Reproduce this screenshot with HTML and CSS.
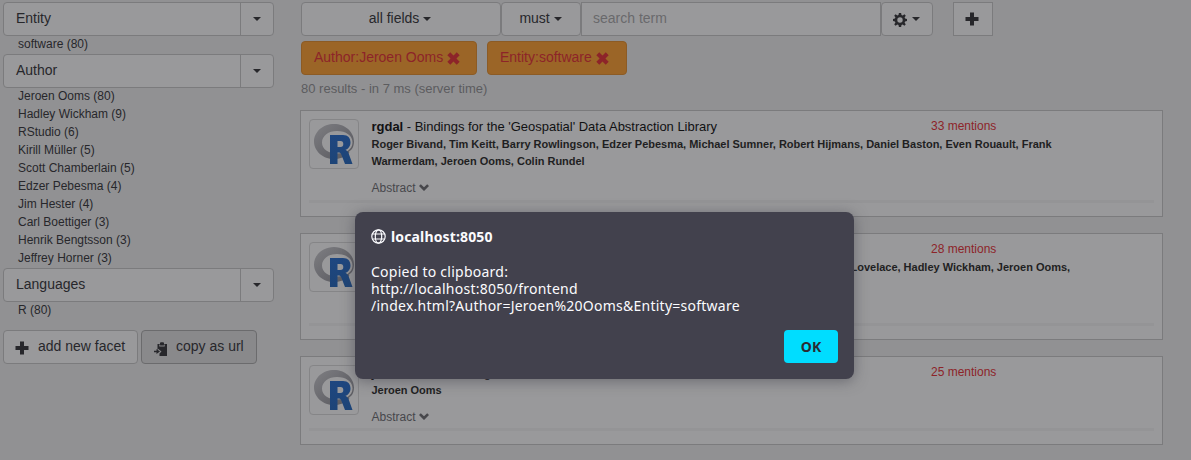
FILE: index.html
```
<!DOCTYPE html>
<html lang="en">
<head>
<meta charset="utf-8">
<title>Software search</title>
<link rel="stylesheet" href="styles.css">
</head>
<body>
<svg class="defs" width="0" height="0">
  <defs>
    <linearGradient id="ring" x1="0" y1="0" x2="1" y2="1"><stop offset="0" stop-color="#7e7e82"/><stop offset="1" stop-color="#56565c"/></linearGradient>
    <linearGradient id="blue" x1="0" y1="0" x2="0" y2="1"><stop offset="0" stop-color="#1f4780"/><stop offset="1" stop-color="#1d4477"/></linearGradient>
    <symbol id="rlogo" viewBox="0 0 40 40">
      <path fill="url(#ring)" fill-rule="evenodd" d="M20 0C31 0 40 7.800 40 17.500S31 35 20 35 0 27.200 0 17.500 9 0 20 0ZM23 7C14.500 7 8 11.800 8 18.500S14.500 29.500 23 29.500 38.500 25.500 38.500 18.500 32 7 23 7Z"/>
      <path fill="#99999b" d="M35 27.500L39 24.500V33L37 33Z"/>
      <path fill="url(#blue)" fill-rule="evenodd" d="M16 11H29C34 11 36.500 14 36.500 18.500 36.500 22.500 34 25 31.500 25.800 33 26.500 34 28 34.700 29.500L38.500 40H31L27.500 31C26.800 29 26 28.500 24 28.500H23.500V40H16ZM23.500 17V23H26.500C28.500 23 29.300 22 29.300 20S28.500 17 26.500 17Z"/>
    </symbol>
    <symbol id="plus" viewBox="0 0 14 14"><path d="M5 .5h4V5h4.500v4H9v4.500H5V9H.5V5H5Z"/></symbol>
    <symbol id="cross" viewBox="0 0 12 12"><path d="M3 .3L6 3.300 9 .3 11.700 3 8.700 6l3 3L9 11.700l-3-3-3 3L.3 9l3-3-3-3Z"/></symbol>
    <symbol id="chev" viewBox="0 0 10 7"><path d="M0 2L1.800.2 5 3.300 8.200.2 10 2 5 7Z"/></symbol>
  </defs>
</svg>
<div class="page">
  <aside class="side">
    <div class="facet"><span class="name">Entity</span><span class="toggle"><i class="caret"></i></span></div>
    <ul><li>software (80)</li></ul>
    <div class="facet"><span class="name">Author</span><span class="toggle"><i class="caret"></i></span></div>
    <ul><li>Jeroen Ooms (80)</li><li>Hadley Wickham (9)</li><li>RStudio (6)</li><li>Kirill Müller (5)</li><li>Scott Chamberlain (5)</li><li>Edzer Pebesma (4)</li><li>Jim Hester (4)</li><li>Carl Boettiger (3)</li><li>Henrik Bengtsson (3)</li><li>Jeffrey Horner (3)</li></ul>
    <div class="facet"><span class="name">Languages</span><span class="toggle"><i class="caret"></i></span></div>
    <ul><li>R (80)</li></ul>
    <div class="actions">
      <div class="btn add"><svg width="14" height="14"><use href="#plus"/></svg><span>add new facet</span></div>
      <div class="btn copy"><svg width="14" height="14" viewBox="0 0 14 14"><path d="M3.500 2H6V1.200Q6 .2 7 .2h2q1 0 1 1V2h3v12H5.500V11.500L7.500 9.500 4 6.800V8.500H3.500Z"/><path d="M0 8.800h2.500V7L6 9.500 2.500 12v-1.700H0Z"/><path class="clip" d="M5.300 2.500v2h5.400v-2h-.8v1.100H6.100V2.500Z"/></svg><span>copy as url</span></div>
    </div>
  </aside>
  <main class="main">
    <div class="search">
      <div class="btn fields">all fields <i class="caret"></i></div>
      <div class="btn must">must <i class="caret"></i></div>
      <div class="input">search term</div>
      <div class="btn cog"><svg width="14" height="14" viewBox="0 0 14 14"><path fill-rule="evenodd" d="M5.900 0h2.200l.4 2 1.200.5L11.400 1.300 12.800 2.700 11.600 4.300l.5 1.300 1.900.3v2.200l-1.900.3-.5 1.300 1.200 1.600-1.400 1.400-1.700-1.200-1.200.5-.4 2H5.900L5.500 12l-1.200-.5-1.700 1.200-1.400-1.400 1.200-1.600L1.900 8.400 0 8.100V5.900l1.900-.3.5-1.300L1.200 2.700l1.400-1.400 1.700 1.200L5.500 2ZM7 4.300a2.700 2.700 0 1 0 0 5.400 2.700 2.700 0 0 0 0-5.400Z"/></svg><i class="caret"></i></div>
      <div class="btn more"><svg width="14" height="14"><use href="#plus"/></svg></div>
    </div>
    <div class="tags">
      <div class="tag author">Author:Jeroen Ooms <svg width="13" height="13"><use href="#cross"/></svg></div>
      <div class="tag">Entity:software <svg width="13" height="13"><use href="#cross"/></svg></div>
    </div>
    <div class="count">80 results - in 7 ms (server time)</div>
    <article class="card">
      <div class="thumb"><svg width="40" height="40"><use href="#rlogo"/></svg></div>
      <div class="body"><div class="title"><b>rgdal</b> - Bindings for the 'Geospatial' Data Abstraction Library</div>
        <div class="authors">Roger Bivand, Tim Keitt, Barry Rowlingson, Edzer Pebesma, Michael Sumner, Robert Hijmans, Daniel Baston, Even Rouault, Frank<br>Warmerdam, Jeroen Ooms, Colin Rundel</div>
        <div class="abstract">Abstract <svg width="10" height="7"><use href="#chev"/></svg></div></div>
      <div class="mentions">33 mentions</div>
    </article>
    <article class="card">
      <div class="thumb"><svg width="40" height="40"><use href="#rlogo"/></svg></div>
      <div class="body"><div class="title">&nbsp;</div><div class="authors tail">Lovelace, Hadley Wickham, Jeroen Ooms,</div></div>
      <div class="mentions">28 mentions</div>
    </article>
    <article class="card short">
      <div class="thumb"><svg width="40" height="40"><use href="#rlogo"/></svg></div>
      <div class="body"><div class="title"><b>jsonlite</b> - Converting data to JSON, for R</div><div class="authors">Jeroen Ooms</div>
        <div class="abstract">Abstract <svg width="10" height="7"><use href="#chev"/></svg></div></div>
      <div class="mentions">25 mentions</div>
    </article>
  </main>
</div>
<div class="dialog">
  <div class="host"><svg class="globe" width="15" height="15" viewBox="0 0 15 15"><circle cx="7.500" cy="7.500" r="6.700"/><ellipse cx="7.500" cy="7.500" rx="3.200" ry="6.700"/><path d="M1.500 5h12M1.500 10h12"/></svg><span>localhost:8050</span></div>
  <div class="msg"><div>Copied to clipboard:</div><div>http://localhost:8050/frontend</div><div>/index.html?Author=Jeroen%20Ooms&amp;Entity=software</div></div>
  <div class="ok">OK</div>
</div>
</body>
</html>
```
FILE: styles.css
```
* { box-sizing: border-box; }
body { margin: 0; width: 1191px; height: 460px; overflow: hidden; background: #919193; color: #27272b; font: 14px/20px "Liberation Sans", Arial, sans-serif; }
.defs { position: absolute; }
svg { flex: none; fill: currentColor; }
.page { display: flex; height: 460px; }
.side { width: 301px; padding: 2px 0 0 3px; }
.facet { display: flex; width: 271px; height: 34px; border: 1px solid #7b7b7d; border-radius: 4px; background: #99999b; }
.name { flex: 1; padding: 5px 12px; }
.toggle { width: 33px; border-left: 1px solid #7b7b7d; display: flex; align-items: center; justify-content: center; }
.caret { display: inline-block; width: 0; height: 0; border: 4px solid transparent; border-top-color: currentColor; border-bottom: 0; vertical-align: middle; }
ul { margin: 0; padding: 0 0 0 15px; list-style: none; font-size: 12px; line-height: 16px; }
li { height: 18px; }
.btn { height: 34px; border: 1px solid #7b7b7d; border-radius: 4px; background: #99999b; padding: 5px 12px; white-space: nowrap; }
.actions { display: flex; gap: 3px; margin-top: 10px; }
.actions .btn { display: flex; gap: 9px; }
.actions svg { margin-top: 6px; }
.actions .add { width: 135px; padding-left: 11px; }
.actions .add svg { margin-top: 5px; }
.actions .copy { width: 116px; background: #89898b; border-color: #6b6b6d; gap: 8px; }
.clip { fill: #89898b; }
.main { width: 862px; padding-top: 2px; }
.search { display: flex; }
.search .fields { width: 200px; padding: 5px 13px 5px 11px; text-align: center; }
.search .must { width: 80px; padding: 5px 12px 5px 11px; text-align: center; }
.input { width: 300px; height: 34px; border: 1px solid #7b7b7d; background: #99999b; color: #69696c; padding: 5px 11px; }
.cog { width: 52px; display: flex; gap: 5px; align-items: center; }
.search .cog { padding-left: 11px; }
.cog svg { margin-top: 2px; }
.search .more { width: 40px; margin-left: 20px; border-radius: 0; padding: 9px 11px; }
.more svg { display: block; }
.tags { display: flex; gap: 10px; margin-top: 5px; }
.tag { width: 140px; height: 34px; padding: 5px 12px; border: 1px solid #8c5b25; border-radius: 4px; background: #9b6527; color: #8d2429; white-space: nowrap; }
.tag.author { width: 176px; }
.tag svg { vertical-align: -3px; }
.count { height: 35px; padding-top: 4px; font-size: 13px; color: #5c5c5f; }
.card { position: relative; display: flex; width: 863px; height: 107px; margin: 0 0 16px -1px; padding: 8px; border: 1px solid #7b7b7d; background: #99999b; }
.card::after { content: ""; position: absolute; left: 8px; right: 8px; bottom: 13px; height: 3px; background: #949496; }
.card.short { height: 89px; }
.thumb { width: 50px; height: 50px; padding: 4px; border: 1px solid #858587; border-radius: 4px; }
.body { width: 700px; margin-left: 12.5px; }
.title { font-size: 13px; line-height: 15px; height: 16px; color: #111113; white-space: nowrap; letter-spacing: -.02px; }
.authors { margin-top: 1px; font-size: 11px; line-height: 17px; font-weight: bold; white-space: nowrap; color: #1f1f22; letter-spacing: -.01px; }
.tail { padding-left: 479px; }
.abstract { margin-top: 9px; font-size: 12px; line-height: 18px; color: #47474b; }
.abstract svg { vertical-align: 1px; }
.mentions { position: absolute; left: 630px; top: 7px; font-size: 12px; line-height: 16px; color: #8d2429; }
.dialog { position: absolute; left: 355px; top: 212px; width: 499px; height: 167px; padding: 15px 16px; border-radius: 8px; background: #42414d; color: #fbfbfe; box-shadow: 0 2px 14px rgba(58,57,68,.5); font: 14px/17px "Noto Sans", sans-serif; }
.host { display: flex; gap: 5px; align-items: center; height: 18px; font-weight: bold; letter-spacing: .14px; }
.globe { margin-top: 1px; fill: none; stroke: #fbfbfe; stroke-width: 1.2; }
.msg { margin-top: 18px; white-space: nowrap; letter-spacing: .25px; }
.ok { width: 54px; height: 33px; margin: 16px 0 0 413px; border-radius: 4px; background: #00ddff; color: #2b2a33; font-weight: bold; line-height: 33px; text-align: center; }
```
